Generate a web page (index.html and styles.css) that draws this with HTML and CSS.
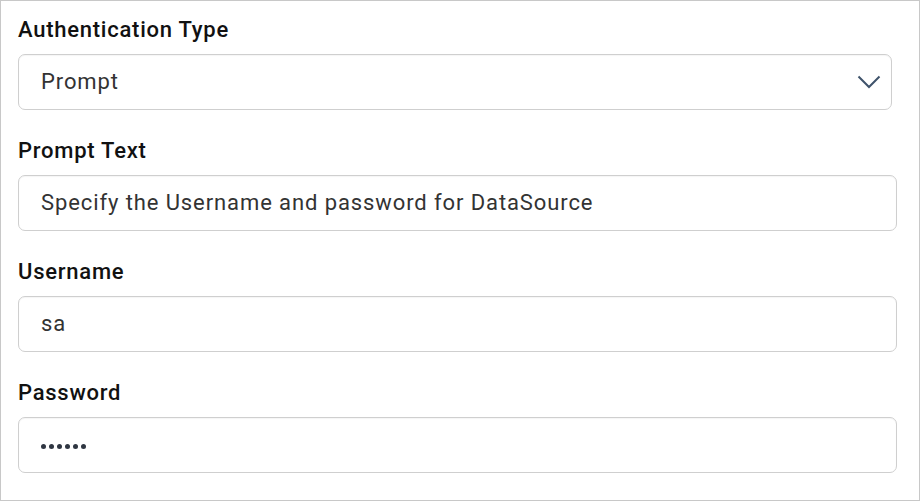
FILE: index.html
```html
<!DOCTYPE html>
<html>
<head>
<meta charset="utf-8">
<link rel="stylesheet" href="styles.css">
</head>
<body>
<div class="panel">
  <div class="field">
    <div class="label">Authentication Type</div>
    <div class="control select">
      <span class="value">Prompt</span>
      <svg class="chevron" width="24" height="14" viewBox="0 0 24 14"><path d="M1.5 1.5 L12 12 L22.5 1.5" fill="none" stroke="#3f536b" stroke-width="2"/></svg>
    </div>
  </div>
  <div class="field">
    <div class="label">Prompt Text</div>
    <div class="control"><span class="value">Specify the Username and password for DataSource</span></div>
  </div>
  <div class="field">
    <div class="label">Username</div>
    <div class="control"><span class="value">sa</span></div>
  </div>
  <div class="field">
    <div class="label">Password</div>
    <div class="control"><span class="dots" aria-label="••••••"><i></i><i></i><i></i><i></i><i></i><i></i></span></div>
  </div>
</div>
</body>
</html>
```
FILE: styles.css
```css
html, body {
  margin: 0;
  padding: 0;
  background: #ffffff;
}
.panel {
  box-sizing: border-box;
  width: 920px;
  height: 501px;
  border: 1px solid #c8c8c8;
  padding: 16px 22px 0 17px;
  display: flex;
  flex-direction: column;
  gap: 28px;
  font-family: Roboto, "Liberation Sans", sans-serif;
}
.field {
  display: flex;
  flex-direction: column;
  gap: 11px;
}
.label {
  font-size: 22px;
  line-height: 26px;
  font-weight: 500;
  color: #111111;
  letter-spacing: 0.75px;
}
.control {
  box-sizing: border-box;
  height: 56px;
  border: 1px solid #cfcfcf;
  border-radius: 7px;
  padding: 0 21px 0 22px;
  display: flex;
  align-items: center;
  box-shadow: inset 0 1px 1px rgba(0,0,0,0.04);
}
.select {
  margin-right: 5px;
  justify-content: space-between;
  padding-right: 10px;
}
.value {
  font-size: 22px;
  line-height: 26px;
  color: #333333;
  letter-spacing: 0.9px;
}
.dots {
  display: flex;
  gap: 3px;
  margin-top: 2px;
}
.dots i {
  display: block;
  width: 5px;
  height: 5px;
  border-radius: 50%;
  background: #2f3642;
}
.chevron {
  display: block;
}
```
